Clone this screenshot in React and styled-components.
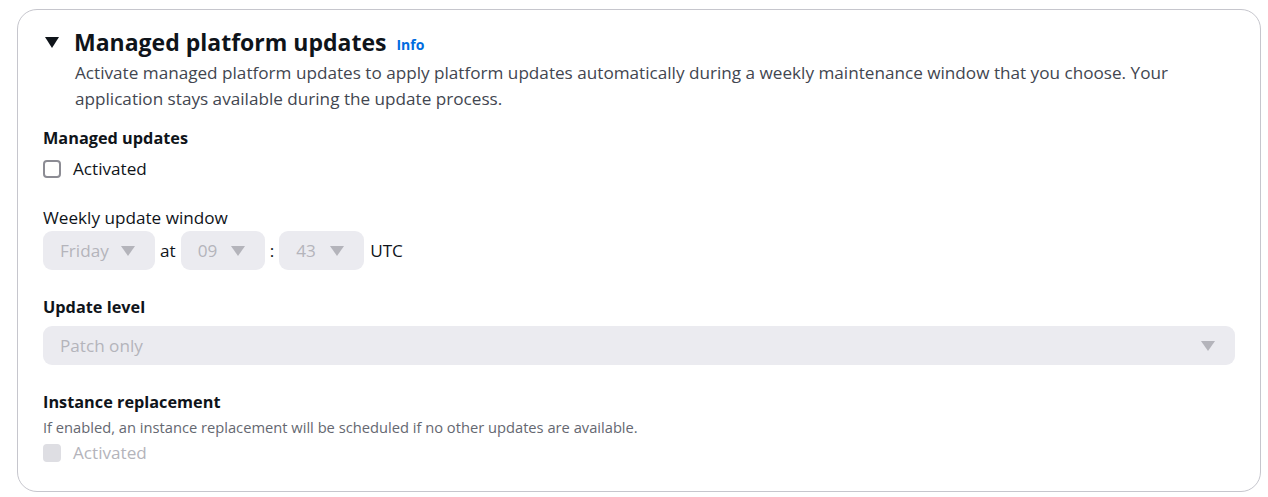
import React from "react";
import styled, { createGlobalStyle } from "styled-components";

const GlobalStyle = createGlobalStyle`
  body {
    margin: 0;
    background: #ffffff;
    font-family: "Open Sans", "Helvetica Neue", Roboto, Arial, sans-serif;
    color: #0f141a;
  }
`;

const Page = styled.div`
  padding: 9px 7px 6px 17px;
`;

const Card = styled.section`
  border: 1px solid #c6c6cd;
  border-radius: 20px;
  padding: 17px 25px 25.5px 25px;
  background: #fff;
`;

const HeaderRow = styled.div`
  display: flex;
  align-items: center;
  height: 30px;
`;

const Caret = styled.span`
  display: inline-block;
  width: 0;
  height: 0;
  margin-left: 2px;
  margin-right: 15px;
  border-left: 7.5px solid transparent;
  border-right: 7.5px solid transparent;
  border-top: 11px solid #0f141a;
`;

const Title = styled.h2`
  margin: 0;
  font-size: 23px;
  line-height: 30px;
  font-weight: 700;
  color: #0f141a;
`;

const InfoLink = styled.a`
  margin-left: 10px;
  margin-top: 4px;
  font-size: 14px;
  font-weight: 700;
  color: #006ce0;
  text-decoration: none;
`;

const Description = styled.p`
  margin: 3px 0 0 32px;
  font-size: 17.15px;
  line-height: 26px;
  color: #424650;
`;

const Field = styled.div`
  margin-top: ${p => p.$top}px;
`;

const Label = styled.div`
  font-size: ${p => (p.$bold ? "16.3px" : "17.15px")};
  line-height: 25px;
  font-weight: ${p => (p.$bold ? 700 : 400)};
  color: #0f141a;
`;

const Hint = styled.div`
  font-size: 14.7px;
  line-height: 20px;
  color: #656871;
  margin-top: 1.5px;
`;

const CheckRow = styled.label`
  display: flex;
  align-items: center;
  gap: 12px;
  height: 25px;
  margin-top: ${p => p.$top || 0}px;
  font-size: 17.15px;
  color: ${p => (p.$disabled ? "#b4b4bb" : "#0f141a")};
`;

const Box = styled.span`
  box-sizing: border-box;
  width: 18px;
  height: 18px;
  border-radius: 4px;
  border: 2px solid ${p => (p.$disabled ? "#dedee3" : "#8c8c94")};
  background: ${p => (p.$disabled ? "#dedee3" : "#fff")};
`;

const TimeRow = styled.div`
  display: flex;
  align-items: center;
  gap: 5px;
  margin-top: 0.5px;
  font-size: 17.15px;
  color: #0f141a;
`;

const Select = styled.div`
  box-sizing: border-box;
  display: flex;
  align-items: center;
  justify-content: space-between;
  width: ${p => p.$width || "100%"};
  height: 39px;
  margin-top: ${p => p.$top || 0}px;
  padding: 0 20px 0 17px;
  border-radius: 9px;
  background: #ebebf0;
  color: #b4b4bb;
  font-size: 17.15px;
`;

const Arrow = styled.span`
  width: 0;
  height: 0;
  border-left: 7px solid transparent;
  border-right: 7px solid transparent;
  border-top: 10px solid #b4b4bb;
  margin-top: 1px;
`;

const Unit = styled.span`
  margin-left: 1px;
`;

const SelectBox = ({ value, width, top }) => (
  <Select $width={width} $top={top}>
    <span>{value}</span>
    <Arrow />
  </Select>
);

export default function App() {
  return (
    <Page>
      <GlobalStyle />
      <Card>
        <HeaderRow>
          <Caret />
          <Title>Managed platform updates</Title>
          <InfoLink href="#">Info</InfoLink>
        </HeaderRow>
        <Description>
          Activate managed platform updates to apply platform updates automatically during a weekly
          maintenance window that you choose. Your application stays available during the update
          process.
        </Description>

        <Field $top={14}>
          <Label $bold>Managed updates</Label>
          <CheckRow $top={5}>
            <Box />
            Activated
          </CheckRow>
        </Field>

        <Field $top={24}>
          <Label>Weekly update window</Label>
          <TimeRow>
            <SelectBox value="Friday" width="112px" />
            <span>at</span>
            <SelectBox value="09" width="84px" />
            <span>:</span>
            <SelectBox value="43" width="85px" />
            <Unit>UTC</Unit>
          </TimeRow>
        </Field>

        <Field $top={25.5}>
          <Label $bold>Update level</Label>
          <SelectBox value="Patch only" top={5.5} />
        </Field>

        <Field $top={25.5}>
          <Label $bold>Instance replacement</Label>
          <Hint>If enabled, an instance replacement will be scheduled if no other updates are available.</Hint>
          <CheckRow $disabled $top={3.5}>
            <Box $disabled />
            Activated
          </CheckRow>
        </Field>
      </Card>
    </Page>
  );
}
